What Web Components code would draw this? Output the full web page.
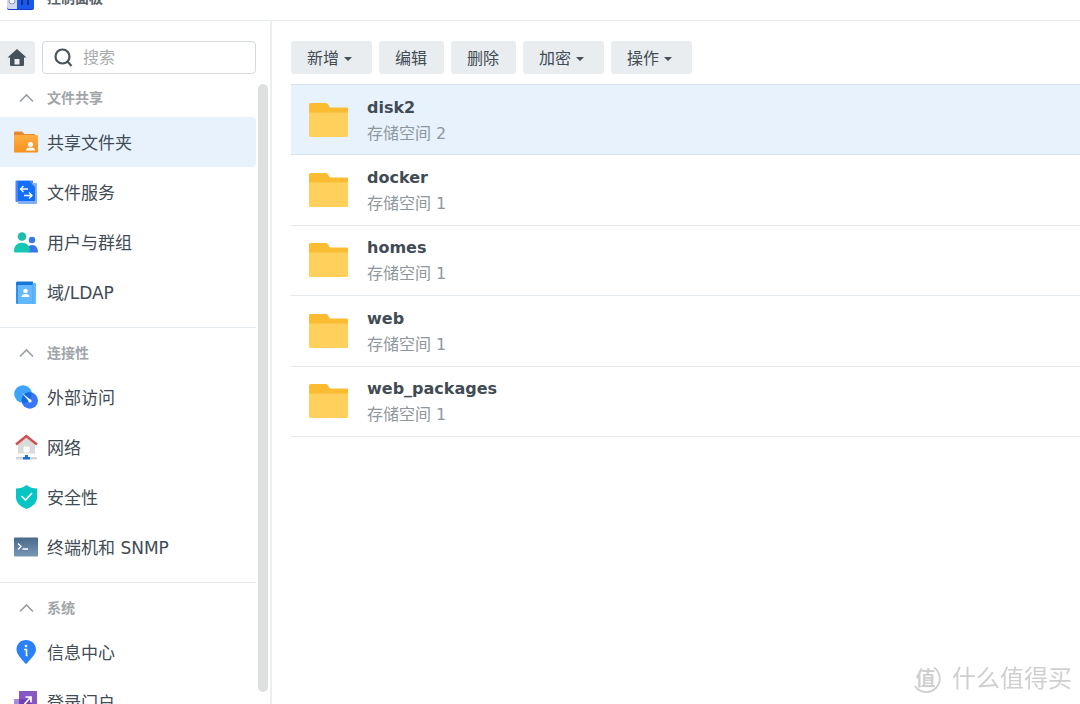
<!DOCTYPE html>
<html lang="zh-CN">
<head>
<meta charset="utf-8">
<meta name="viewport" content="width=device-width, initial-scale=1">
<title>控制面板</title>
<style>
  html, body { height: 100%; }
  body {
    margin: 0; overflow: hidden; background: #fff; color: #414b55;
    font-family: "DejaVu Sans", "Noto Sans CJK SC", sans-serif;
    --line: #e6ebef; --control: #e9edf0; --active: #e7f2fd; --muted: #8f979d;
  }
</style>
</head>
<body>
<control-panel>
  <panel-title slot="title">控制面板</panel-title>
  <search-bar slot="sidebar"></search-bar>
  <nav-scroller slot="sidebar">
    <nav-section label="文件共享">
      <nav-item icon="share" selected>共享文件夹</nav-item>
      <nav-item icon="service">文件服务</nav-item>
      <nav-item icon="users">用户与群组</nav-item>
      <nav-item icon="domain">域/LDAP</nav-item>
    </nav-section>
    <nav-section label="连接性">
      <nav-item icon="external">外部访问</nav-item>
      <nav-item icon="network">网络</nav-item>
      <nav-item icon="security">安全性</nav-item>
      <nav-item icon="terminal">终端机和 SNMP</nav-item>
    </nav-section>
    <nav-section label="系统">
      <nav-item icon="info">信息中心</nav-item>
      <nav-item icon="portal">登录门户</nav-item>
    </nav-section>
  </nav-scroller>
  <tool-bar>
    <tool-button menu>新增</tool-button>
    <tool-button>编辑</tool-button>
    <tool-button>删除</tool-button>
    <tool-button menu>加密</tool-button>
    <tool-button menu>操作</tool-button>
  </tool-bar>
  <folder-list>
    <folder-row selected>disk2<span slot="volume">存储空间 2</span></folder-row>
    <folder-row>docker<span slot="volume">存储空间 1</span></folder-row>
    <folder-row>homes<span slot="volume">存储空间 1</span></folder-row>
    <folder-row>web<span slot="volume">存储空间 1</span></folder-row>
    <folder-row>web_packages<span slot="volume">存储空间 1</span></folder-row>
  </folder-list>
</control-panel>
<site-mark mark="值">什么值得买</site-mark>

<script>
const define = (name, render) => customElements.define(name, class extends HTMLElement {
  connectedCallback() {
    if (this.shadowRoot) return;
    const t = document.createElement('template');
    t.innerHTML = '<style>:host,*{box-sizing:border-box}</style>' + render(this);
    this.attachShadow({ mode: 'open' }).append(t.content.cloneNode(true));
  }
});

const icons = {
  share: `<defs><linearGradient id="g" x2="0" y2="1"><stop stop-color="#ffae42"/><stop offset="1" stop-color="#f6921e"/></linearGradient></defs>
    <path d="M0 2.500Q0 1.500 1 1.500H8L10.500 4H21V12H0Z" fill="#e98a32"/><path d="M0 5H23Q24 5 24 6V21.500Q24 22.500 23 22.500H1Q0 22.500 0 21.500Z" fill="url(#g)"/>
    <circle cx="16.500" cy="14.500" r="2.500" fill="#fff"/><path d="M12 20.500Q12 17.500 16.500 17.500T21 20.500Z" fill="#fff"/>`,
  service: `<path d="M1.500 1.500Q1.500.500 2.500.500H19V22H2.500Q1.500 22 1.500 21Z" fill="#4c86f0"/><path d="M18 3H22Q23 3 23 4V23Q23 24 22 24H5Q4 24 4 23V21H18Z" fill="#83aef8"/>
    <path d="M4 1H15L21 7V21H4Z" fill="#146ff8"/><path d="M14 9H7M9.500 6L6.500 9L9.500 12M10 15.500H17.500M15 12.500L18 15.500L15 18.500" fill="none" stroke="#fff" stroke-width="1.300"/>`,
  users: `<circle cx="18" cy="10" r="3.200" fill="#347ae8"/><path d="M14 22.500V19Q14 15 18.500 15T24 21V22Q24 22.500 23.500 22.500Z" fill="#3976e9"/>
    <circle cx="8" cy="6.500" r="4.300" fill="#20bea9"/><path d="M0 21.500Q0 12.800 8 12.800T16 21.500Q16 22.500 15 22.500H1Q0 22.500 0 21.500Z" fill="#16c7b3"/>`,
  domain: `<path d="M2 3Q2 1.500 3.500 1.500H19V7H2Z" fill="#1677d9"/><path d="M2 5H4V24H3Q2 24 2 23Z" fill="#2e91ed"/><path d="M19 3H21Q22 3 22 4V23Q22 24 21 24H4V5H19Z" fill="#63b8ff"/><path d="M19 3V24" stroke="#4aa5f6"/>
    <circle cx="11.500" cy="11" r="2.300" fill="#fff"/><path d="M7.500 17Q7.500 14 11.500 14T15.500 17Z" fill="#fff"/>`,
  external: `<circle cx="9" cy="9" r="8.800" fill="#3ea3fb"/><circle cx="15.800" cy="15.500" r="8.200" fill="#3977fa"/><path d="M7.800 13.500A8.200 8.200 0 0 1 17.500 7.500A8.800 8.800 0 0 1 8 17.800Z" fill="#126be0"/><path d="M8 8L17 15L15.500 17Z" fill="#fff"/><circle cx="16" cy="16" r="1.600" fill="#fff"/>`,
  network: `<path d="M4 8L12 2L21 8V18.500H4Z" fill="#d9dada"/><path d="M2 9.500L12.300 1L23 9.500" fill="none" stroke="#d34f4f" stroke-width="2.500"/><rect x="9.500" y="11.500" width="6" height="6" rx="1" fill="#fff"/><path d="M2 22H23V24.500H2Z" fill="#d0d5da"/><path d="M9 22H11V20H14V22H16V24.500H9Z" fill="#1b72df"/>`,
  security: `<path d="M12.500 0Q17 3.500 23 3.500V13Q23 20 12.500 24Q2 20 2 13V3.500Q8 3.500 12.500 0Z" fill="#08c5c5"/><path d="M7.500 11L11.500 15L18 8" fill="none" stroke="#fff" stroke-width="1.600"/>`,
  terminal: `<defs><linearGradient id="g" x2="0" y2="1"><stop stop-color="#49698b"/><stop offset="1" stop-color="#7997b5"/></linearGradient></defs><rect y="2.500" width="24" height="19" rx=".8" fill="url(#g)"/><path d="M4 8.500L7 11.500L4 14.500M8.500 14H14" fill="none" stroke="#fff" stroke-width="1.300"/>`,
  info: `<path d="M12 0C6.500 0 2.500 4.200 2.500 9.500C2.500 15 8 19 10.500 22.800Q12 24.500 13.500 22.800C16 19 22 15 22 9.500C22 4.200 17.500 0 12 0Z" fill="#2880fa"/><circle cx="12" cy="6" r="1.300" fill="#fff"/><path d="M10 9.500H12.500V16M12.500 15.700H13.500" fill="none" stroke="#fff" stroke-width="1.600"/>`,
  portal: `<path d="M0 9H18V24H0Z" fill="#a68ddc"/><path d="M5 1H23V19H5Z" fill="#8758c4"/><path d="M5 9H18V19H5Z" fill="#7440b5"/><path d="M10.500 14L16.500 7.500M11.500 7H17V12.500" fill="none" stroke="#fff" stroke-width="1.700"/>`
};

define('control-panel', () => `<style>
  :host{display:flex;flex-direction:column;height:100vh;overflow:hidden}
  .body{display:flex;flex:1;min-height:0}
  aside{display:flex;flex-direction:column;flex:none;width:272px;padding-top:20px;border-right:2px solid #eceff0}
  main{flex:1;min-width:0;padding:20px 0 0 19px}
</style><slot name="title"></slot>
<div class="body"><aside><slot name="sidebar"></slot></aside><main><slot></slot></main></div>`);

define('panel-title', () => `<style>
  :host{display:block;flex:none;margin-top:-27px}
  header{display:flex;align-items:center;gap:13px;height:48px;padding:2px 0 0 7px;border-bottom:1px solid var(--line)}
  h1{margin:0;font-size:14px;line-height:20px;font-weight:700;color:#5a636b}
  svg{display:block}
</style><header><svg width="27" height="24" viewBox="0 0 27 24"><rect width="27" height="24" rx="2" fill="#163fc5"/><path d="M2 0H10V23H2Q0 23 0 21V2Q0 0 2 0Z" fill="#d5d8ee"/><path d="M10 0H25Q27 0 27 2V21Q27 23 25 23H10Z" fill="#1858ed"/><circle cx="5" cy="15" r="3" fill="#f4f4ff" stroke="#8f98cc"/><path d="M15 12V19M21 12V19" stroke="#103393" stroke-width="2"/></svg><h1><slot></slot></h1></header>`);

define('search-bar', () => `<style>
  :host{display:block;flex:none}
  form{display:flex;gap:7px;margin:0 14px 0 0}
  button{display:grid;place-items:center;flex:none;width:35px;height:33px;padding:0 2px 0 0;border:0;border-radius:0 3px 3px 0;background:var(--control)}
  label{display:flex;flex:1;min-width:0;align-items:center;gap:10px;height:33px;padding:0 11px;border:1px solid #d3d9dd;border-radius:4px}
  svg{flex:none}
  input{flex:1;min-width:0;height:24px;padding:0;border:0;outline:0;background:none;font:16px/24px "DejaVu Sans","Noto Sans CJK SC",sans-serif;color:#414b55}
  input::placeholder{color:#a7abae;opacity:1}
</style><form role="search"><button type="button" aria-label="主页"><svg width="20" height="18" viewBox="0 0 20 18"><path d="M10 0L19.500 8.500H17V16Q17 17 16 17H4Q3 17 3 16V8.500H.5Z" fill="#46525b"/><path d="M7.500 10H12.500V15.500H7.500Z" fill="#eef1f3"/></svg></button>
<label><svg width="19" height="19" viewBox="0 0 19 19" fill="none" stroke="#49545b" stroke-width="2.200"><circle cx="8.500" cy="8.500" r="7"/><path d="M13.500 13.500L17.500 18"/></svg><input type="text" placeholder="搜索" aria-label="搜索"></label></form>`);

define('nav-scroller', () => `<style>
  :host{display:flex;flex:1;min-height:0;gap:2px}
  nav{flex:1;min-width:0;overflow:hidden;padding-top:5px}
  .track{width:10px;margin:10px 2px 12px 0;border-radius:5px;background:#dedfdf}
</style><nav><slot></slot></nav><div class="track"></div>`);

define('nav-section', h => `<style>
  :host{display:block;padding-bottom:10px}
  :host(:not(:first-of-type)){border-top:1px solid var(--line);padding-top:6px}
  button{display:flex;align-items:center;gap:13px;width:100%;height:38px;padding:0 0 0 19px;border:0;background:none;color:#a0a5a8;font:700 14px/20px "DejaVu Sans","Noto Sans CJK SC",sans-serif}
</style><button type="button" aria-expanded="true"><svg width="15" height="10" viewBox="0 0 15 10"><path d="M1 8.500L7.500 2L14 8.500" fill="none" stroke="#999fa2" stroke-width="1.600"/></svg>${h.getAttribute('label')}</button><slot></slot>`);

define('nav-item', h => `<style>
  :host{display:block}
  a{display:flex;align-items:center;gap:9px;height:50px;padding-left:14px;border-radius:0 4px 4px 0;color:#414b55;font-size:17px;line-height:24px;text-decoration:none;white-space:nowrap}
  :host([selected]) a{background:var(--active)}
  svg{overflow:visible}
  span{padding-top:2px}
</style><a href="#${h.getAttribute('icon')}"><svg width="24" height="24" viewBox="0 0 24 24" aria-hidden="true">${icons[h.getAttribute('icon')]}</svg><span><slot></slot></span></a>`);

define('tool-bar', () => `<style>:host{display:flex;gap:7px}</style><slot></slot>`);

define('tool-button', h => `<style>
  :host{display:block}
  button{display:flex;align-items:center;justify-content:flex-start;gap:5px;min-width:65px;height:33px;padding:2px 16px 0;border:0;border-radius:3px;background:var(--control);color:#414b55;font:16px/24px "DejaVu Sans","Noto Sans CJK SC",sans-serif}
  :host([menu]) button{min-width:81px}
</style><button type="button"><span><slot></slot></span>${h.hasAttribute('menu') ? '<svg width="8" height="4" viewBox="0 0 8 4"><path d="M0 0H8L4.600 3.600Q4 4 3.400 3.600Z" fill="#46515a"/></svg>' : ''}</button>`);

define('folder-list', () => `<style>
  :host{display:grid;grid-auto-rows:1fr;min-height:353px;margin-top:10px;border-top:1px solid #d5e1ee}
</style><slot></slot>`);

define('folder-row', () => `<style>
  :host{display:flex;align-items:center;gap:19px;min-height:70px;padding-left:18px;border-bottom:1px solid var(--line)}
  :host([selected]){background:var(--active);border-color:#d5e1ee}
  .text{padding-top:2px}
  .name{font-size:16px;line-height:26px;font-weight:700}
  .volume{font-size:16px;line-height:26px;color:var(--muted)}
  svg{flex:none}
</style><svg width="39" height="34" viewBox="0 0 39 34" aria-hidden="true"><path d="M0 1.500Q0 0 1.500 0H17Q18 0 18.700 1L21 4.500H38Q39 4.500 39 5.500V12H0Z" fill="#fcbc32"/><path d="M0 9.500H39V32.500Q39 34 37.500 34H1.500Q0 34 0 32.500Z" fill="#ffd05b"/></svg>
<div class="text"><div class="name"><slot></slot></div><div class="volume"><slot name="volume"></slot></div></div>`);

define('site-mark', h => `<style>
  :host{position:fixed;right:8px;bottom:9px;display:flex;align-items:center;gap:10px;color:#cfcfcf;font-size:24px;line-height:32px;pointer-events:none}
  .mark{display:grid;place-items:center}
  .mark > *{grid-area:1/1}
  b{padding-right:4px;font-size:20px;line-height:24px;font-weight:700}
</style><span class="mark"><svg width="29" height="29" viewBox="0 0 29 29"><path d="M21 2.500A13.500 13.500 0 1 1 2 21" fill="none" stroke="#cfcfcf" stroke-width="1.800"/></svg><b>${h.getAttribute('mark')}</b></span><span><slot></slot></span>`);
</script>
</body>
</html>
